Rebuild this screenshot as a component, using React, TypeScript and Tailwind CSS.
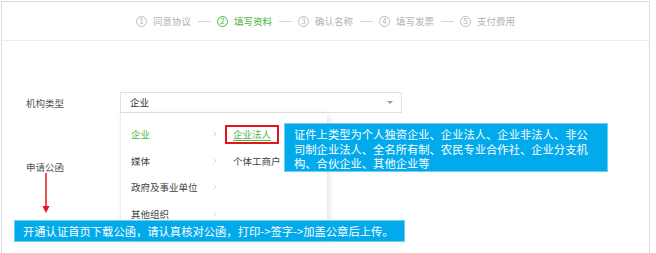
import React from 'react';
import { ChevronRight } from 'lucide-react';

const steps = ['同意协议', '填写资料', '确认名称', '填写发票', '支付费用'];

const Steps: React.FC<{ active: number }> = ({ active }) => (
    <div className="flex items-center">
        {steps.map((s, i) => {
            const on = i === active;
            return (
                <React.Fragment key={s}>
                    {i > 0 && <div className="ml-[7px] mr-[6px] w-[13px] h-px bg-[#d6d6d6]" />}
                    <div className={`flex items-center gap-[6px] ${on ? 'text-[#4fb543]' : 'text-[#b3b3b3]'}`}>
                        <span className={`w-[11px] h-[11px] rounded-full border flex items-center justify-center text-[8px] leading-none ${on ? 'border-[#4fb543] border-[1.5px]' : 'border-[#bdbdbd]'}`}>{i + 1}</span>
                        <span className="text-[9.5px] leading-[14px]">{s}</span>
                    </div>
                </React.Fragment>
            );
        })}
    </div>
);

const App: React.FC = () => {
    const cats = ['企业', '媒体', '政府及事业单位', '其他组织'];

    return (
        <div className="w-[656px] h-[253px] bg-white overflow-hidden font-['Noto_Sans_CJK_SC','Noto_Sans',sans-serif]">
            <div className="ml-[1px] mt-[1px] w-[649px] h-[252px] border-l border-t border-r border-[#dadada] flex flex-col">
                {/* steps header */}
                <div className="h-[39px] shrink-0 border-b border-[#ececec] flex items-center justify-center">
                    <Steps active={1} />
                </div>

                {/* form body */}
                <div className="relative flex-1 pt-[51px]">
                    <div className="flex items-center">
                        <div className="w-[118px] pl-[24px] text-[9.5px] leading-[14px] text-[#555]">机构类型</div>
                        <div className="relative">
                            <div className="w-[282px] h-[21px] border border-[#e2e2e2] pl-[9px] pr-[8px] flex items-center justify-between text-[9.5px] text-[#333]">
                                <span>企业</span>
                                <span className="w-0 h-0 border-l-[3px] border-r-[3px] border-t-[3px] border-l-transparent border-r-transparent border-t-[#999]" />
                            </div>

                            {/* cascader menu */}
                            <div className="absolute left-0 top-full z-10 w-[207px] h-[126px] bg-white border-l border-[#ececec] shadow-[2px_2px_6px_rgba(0,0,0,0.12)] flex">
                                <div className="w-[104px] pt-[8px]">
                                    {cats.map((c, i) => (
                                        <div key={c} className={`h-[26.5px] pl-[10px] pr-[6px] flex items-center justify-between text-[9.5px] ${i === 0 ? 'text-[#4fb543]' : 'text-[#444]'}`}>
                                            <span>{c}</span>
                                            <ChevronRight size={8} strokeWidth={1.5} className={i === 0 ? 'text-[#7cc46f]' : 'text-[#b5b5b5]'} />
                                        </div>
                                    ))}
                                </div>
                                <div className="flex-1 pt-[8px]">
                                    <div className="h-[26.5px] flex items-center">
                                        <span className="border-2 border-[#e3141d] px-[6px] leading-[15px] text-[9.5px] text-[#4fb543] underline underline-offset-2">企业法人</span>
                                    </div>
                                    <div className="h-[26.5px] pl-[8px] flex items-center text-[9.5px] text-[#444]">个体工商户</div>
                                </div>
                            </div>
                        </div>
                    </div>

                    <div className="mt-[47px] pl-[24px] text-[9.5px] leading-[14px] text-[#555]">申请公函</div>

                    {/* annotation: type note */}
                    <div className="absolute left-[282px] top-[82px] z-20 w-[324px] h-[49px] bg-[#03aaeb] border border-[#6fcdf2] pl-[9px] pt-[3px] text-[11.3px] leading-[14.5px] text-white">
                        证件上类型为个人独资企业、企业法人、企业非法人、非公<br />
                        司制企业法人、全名所有制、农民专业合作社、企业分支机<br />
                        构、合伙企业、其他企业等
                    </div>

                    {/* annotation: red arrow */}
                    <svg className="absolute left-[40px] top-[132px] z-20" width="8" height="41" viewBox="0 0 8 41">
                        <line x1="4" y1="0" x2="4" y2="34" stroke="#e3141d" strokeWidth="1.5" />
                        <polygon points="0.5,33 7.5,33 4,40" fill="#e3141d" />
                    </svg>

                    {/* annotation: letter note */}
                    <div className="absolute left-[12px] top-[179px] z-30 w-[391px] h-[22px] bg-[#03aaeb] border border-[#6fcdf2] pl-[8px] flex items-center text-[11.3px] text-white whitespace-nowrap">
                        开通认证首页下载公函，请认真核对公函，打印-&gt;签字-&gt;加盖公章后上传。
                    </div>
                </div>
            </div>
        </div>
    );
};

export default App;
